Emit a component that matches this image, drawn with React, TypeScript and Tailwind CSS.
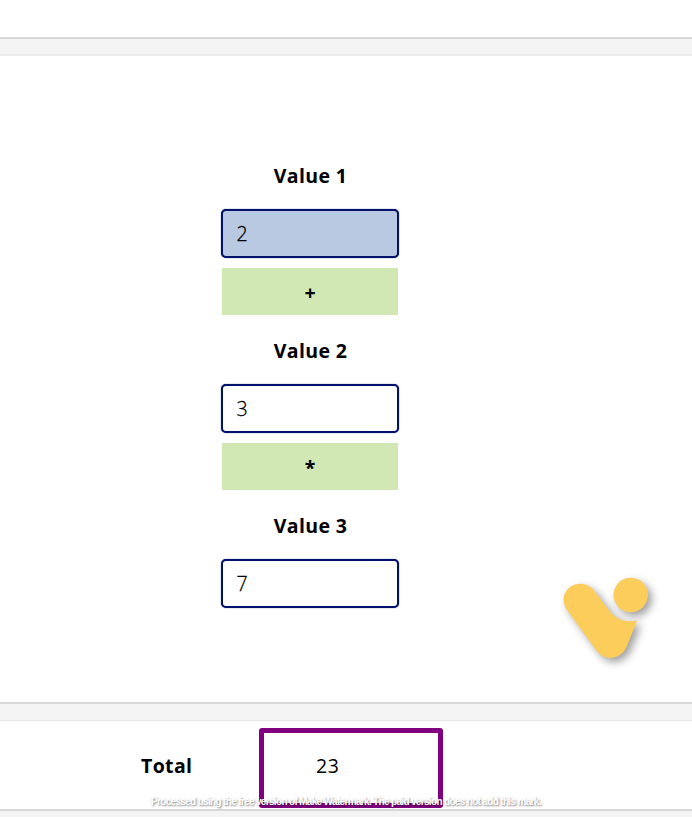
type FieldProps = { label: string; value: string; active?: boolean };

function Field({ label, value, active }: FieldProps) {
  return (
    <>
      <label className="block h-[42px] pl-px text-center text-[19.5px] leading-[28px] font-bold tracking-[0.35px]">
        {label}
      </label>
      <div
        className={`mt-[5px] flex h-[49px] items-center rounded-[5px] border-2 border-[#00126b] pl-[13.5px] text-[19.5px] font-light shadow-[0_0_1px_#00126b] [-webkit-text-stroke:0.3px_black] ${
          active ? "bg-[#b9c9e2]" : "bg-white"
        }`}
      >
        {value}
      </div>
    </>
  );
}

function Operator({ symbol }: { symbol: string }) {
  return (
    <div className="mx-px mt-[10px] mb-[22px] flex h-[47px] items-center justify-center bg-[#d2e8b4] pt-[2px] text-[19.5px] font-bold">
      {symbol}
    </div>
  );
}

function Logo() {
  return (
    <svg
      viewBox="0 0 125 110"
      className="h-[110px] w-[125px] drop-shadow-[4px_4px_4px_rgba(0,0,0,0.38)]"
      fill="#fccd5b"
      aria-hidden="true"
    >
      <circle cx="85.7" cy="30" r="17.2" />
      <path d="M22 45C16 36.5 18.5 27 25 22C33 16.5 43 18 49 25.5L64.5 46C71 54 79 58 92 55.5L82 81C76 95 59.5 97 51 85Z" />
    </svg>
  );
}

export default function App() {
  return (
    <div className="relative h-[817px] w-[692px] overflow-hidden bg-[#f4f4f4] font-['Open_Sans',sans-serif] text-black">
      <header className="h-[39px] border-b-2 border-[#d8d8d8] bg-white" />
      <main className="mt-[15px] flex h-[650px] border-t-2 border-b-2 border-t-[#ebebeb] border-b-[#d8d8d8] bg-white">
        <form className="ml-[221px] w-[178px] pt-[106px]">
          <Field label="Value 1" value="2" active />
          <Operator symbol="+" />
          <Field label="Value 2" value="3" />
          <Operator symbol="*" />
          <Field label="Value 3" value="7" />
        </form>
        <div className="ml-[146px] pt-[509px]">
          <Logo />
        </div>
      </main>
      <footer className="mt-4 flex h-[91px] border-t border-b-2 border-t-[#e7e7e7] border-b-[#d8d8d8] bg-white">
        <div className="w-[259px] pt-[31px] pl-[141px] text-[19.5px] leading-[28px] font-bold tracking-[0.35px]">
          Total
        </div>
        <div className="mt-[7px] h-[80px] w-[184px] rounded-[3px] border-5 border-[#800080] pt-[19px] pl-[52px] text-[19.5px] leading-[28px] tracking-[0.5px]">
          23
        </div>
      </footer>
      <p className="absolute top-[795px] left-[151px] font-['Liberation_Sans',sans-serif] text-[10px] leading-[14px] font-bold tracking-[-0.67px] whitespace-nowrap text-white [text-shadow:1px_1px_2px_rgba(0,0,0,0.5)]">
        Processed using the free version of Make Watermark. The paid version does not add this mark.
      </p>
    </div>
  );
}
